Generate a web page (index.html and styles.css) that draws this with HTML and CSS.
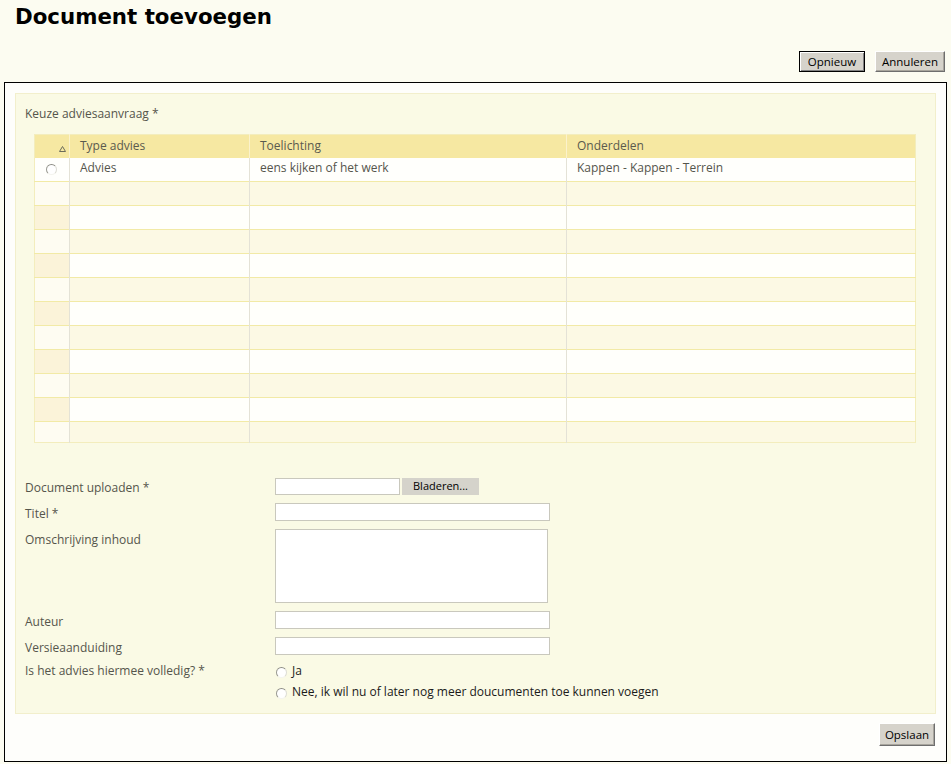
FILE: index.html
```html
<!DOCTYPE html>
<html>
<head>
<meta charset="utf-8">
<title>Document toevoegen</title>
<link rel="stylesheet" href="styles.css">
</head>
<body>
<h1 class="title">Document toevoegen</h1>
<div class="topbar">
  <button class="btn btn-default">Opnieuw</button>
  <button class="btn btn-cancel">Annuleren</button>
</div>
<div class="box">
  <div class="panel">
    <div class="section-label">Keuze adviesaanvraag *</div>
    <table class="grid">
      <colgroup>
        <col class="c1"><col class="c2"><col class="c3"><col class="c4">
      </colgroup>
      <thead>
        <tr>
          <th class="sort"><svg width="7" height="6" viewBox="0 0 7 6"><path d="M3.5 0.5 L6.5 5.5 L0.5 5.5 Z" fill="none" stroke="#6b6b5a" stroke-width="1"/></svg></th>
          <th>Type advies</th>
          <th>Toelichting</th>
          <th>Onderdelen</th>
        </tr>
      </thead>
      <tbody>
        <tr class="first"><td class="sel"><span class="radio"></span></td><td>Advies</td><td>eens kijken of het werk</td><td>Kappen - Kappen - Terrein</td></tr>
        <tr class="odd"><td></td><td></td><td></td><td></td></tr>
        <tr class="even"><td></td><td></td><td></td><td></td></tr>
        <tr class="odd"><td></td><td></td><td></td><td></td></tr>
        <tr class="even"><td></td><td></td><td></td><td></td></tr>
        <tr class="odd"><td></td><td></td><td></td><td></td></tr>
        <tr class="even"><td></td><td></td><td></td><td></td></tr>
        <tr class="odd"><td></td><td></td><td></td><td></td></tr>
        <tr class="even"><td></td><td></td><td></td><td></td></tr>
        <tr class="odd"><td></td><td></td><td></td><td></td></tr>
        <tr class="even"><td></td><td></td><td></td><td></td></tr>
        <tr class="odd last"><td></td><td></td><td></td><td></td></tr>
      </tbody>
    </table>

    <div class="form">
      <div class="row r-upload">
        <div class="label">Document uploaden *</div>
        <div class="field"><span class="input file"></span><span class="browse">Bladeren...</span></div>
      </div>
      <div class="row">
        <div class="label">Titel *</div>
        <div class="field"><span class="input wide"></span></div>
      </div>
      <div class="row r-area">
        <div class="label">Omschrijving inhoud</div>
        <div class="field"><span class="textarea"></span></div>
      </div>
      <div class="row">
        <div class="label">Auteur</div>
        <div class="field"><span class="input wide"></span></div>
      </div>
      <div class="row">
        <div class="label">Versieaanduiding</div>
        <div class="field"><span class="input wide"></span></div>
      </div>
      <div class="row r-radio">
        <div class="label">Is het advies hiermee volledig? *</div>
        <div class="field radios">
          <div class="opt"><span class="radio"></span>Ja</div>
          <div class="opt"><span class="radio"></span>Nee, ik wil nu of later nog meer doucumenten toe kunnen voegen</div>
        </div>
      </div>
    </div>
  </div>
  <div class="bottombar">
    <button class="btn btn-save">Opslaan</button>
  </div>
</div>
</body>
</html>
```
FILE: styles.css
```css
html, body {
  margin: 0;
  padding: 0;
  background: #fcfcf1;
  font-family: "Open Sans", "Liberation Sans", Arial, sans-serif;
  font-size: 12px;
  line-height: 16px;
  color: #55554c;
}
.title {
  margin: 0;
  padding: 4px 0 0 15px;
  height: 42px;
  font-family: "DejaVu Sans", Verdana, sans-serif;
  font-weight: bold;
  font-size: 21.33px;
  line-height: 26px;
  color: #000;
}
.topbar {
  display: flex;
  justify-content: flex-end;
  gap: 10px;
  padding: 5px 6px 0 0;
  box-sizing: border-box;
  height: 36px;
}
.btn {
  font-family: "Open Sans", "Liberation Sans", Arial, sans-serif;
  font-size: 11.5px;
  color: #000;
  background: #d6d3cb;
  height: 21px;
  padding: 0;
  border: 1px solid;
  border-color: #ffffff #6e6e6e #6e6e6e #ffffff;
  box-shadow: inset -1px -1px 0 #a8a59d;
  border-radius: 0;
  line-height: 17px;
}
.btn-default {
  border: 1px solid #000;
  box-shadow: inset 1px 1px 0 #fff, inset -1px -1px 0 #808080;
  width: 66px;
}
.btn-cancel { width: 70px; }
.box {
  margin: 0 4px;
  border: 1px solid #000;
  background: #fefefb;
  padding: 10px 10px 0 10px;
  height: 680px;
  box-sizing: border-box;
}
.panel {
  background: #fafae5;
  border: 1px solid #f2efcc;
  height: 621px;
  box-sizing: border-box;
  padding: 12px 0 0 9px;
}
.section-label {
  height: 28px;
}
.grid {
  border-collapse: collapse;
  table-layout: fixed;
  width: 881px;
  margin-left: 9px;
  border: 1px solid #f3edbd;
}
.c1 { width: 35px; }
.c2 { width: 180px; }
.c3 { width: 317px; }
.c4 { width: 349px; }
.grid th {
  background: #f6e8a2;
  font-weight: normal;
  text-align: left;
  height: 23px;
  padding: 0 0 1px 10px;
  color: #5a5a4e;
  border-left: 1px solid #fbf2cc;
  box-sizing: border-box;
}
.grid th.sort {
  text-align: right;
  padding: 4px 3px 0 0;
}
.grid td {
  height: 24px;
  box-sizing: border-box;
  padding: 0 0 2px 10px;
  border-top: 1px solid #f2eaa6;
  border-left: 1px solid #e4e2d6;
  color: #55554c;
}
.grid tr.first td { background: #fffffc; border-top: none; }
.grid tr.odd td { background: #fcf9e4; }
.grid tr.odd td:first-child { background: #fefcf2; }
.grid tr.even td { background: #fffffb; }
.grid tr.even td:first-child { background: #fbf3d9; }
.grid tr.last td { height: 21px; }
.grid td.sel { padding: 0 0 0 11px; line-height: 10px; }
.grid td:first-child, .grid th:first-child { border-left: none; }

.radio {
  display: inline-block;
  width: 11px;
  height: 11px;
  border-radius: 50%;
  box-sizing: border-box;
  border: 1px solid;
  border-color: #8d8d85 #dcdcd4 #f4f4ee #9a9a92;
  background: #fff;
  vertical-align: middle;
}

.form {
  margin-top: 35px;
  display: flex;
  flex-direction: column;
}
.row {
  display: grid;
  grid-template-columns: 250px 1fr;
  height: 26px;
  align-items: start;
}
.label {
  padding-top: 3px;
}
.r-upload { height: 25px; }
.r-upload .label { padding-top: 2px; }
.field { display: flex; align-items: flex-start; }
.input {
  display: block;
  background: #fff;
  border: 1px solid #c9c8bd;
  height: 18px;
  box-sizing: border-box;
}
.input.file { width: 125px; height: 17px; }
.input.wide { width: 275px; }
.browse {
  display: block;
  margin-left: 2px;
  width: 77px;
  height: 17px;
  background: #d5d3cb;
  color: #000;
  text-align: center;
  line-height: 16px;
  font-size: 11px;
}
.r-area { height: 82px; }
.textarea {
  display: block;
  width: 273px;
  height: 74px;
  background: #fff;
  border: 1px solid #c9c8bd;
  box-sizing: border-box;
}
.r-radio { height: auto; }
.r-radio .label { padding-top: 0; }
.radios { flex-direction: column; }
.opt {
  height: 21px;
  color: #1a1a1a;
  display: flex;
  align-items: flex-start;
}
.opt .radio { margin: 4px 5px 0 1px; }

.bottombar {
  display: flex;
  justify-content: flex-end;
  padding: 9px 1px 0 0;
}
.btn-save {
  width: 56px;
  height: 23px;
}
```
